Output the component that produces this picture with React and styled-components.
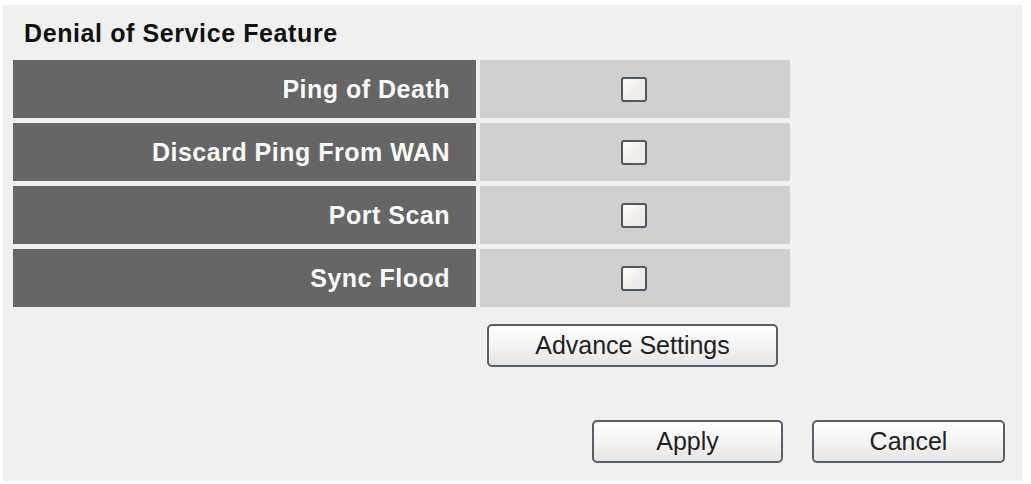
import { Fragment } from 'react'
import styled, { createGlobalStyle } from 'styled-components'

const GlobalStyle = createGlobalStyle`
    html, body {
        margin: 0;
        padding: 0;
        background: #fff;
    }
    body {
        font-family: "Liberation Sans", Arial, sans-serif;
    }
`;

const Panel = styled.section`
    margin: 5px 9px 3px 3px;
    padding: 13px 17px 18px 10px;
    background: #f0f0f0;
    box-sizing: border-box;
    height: 476px;
`;

const Title = styled.h1`
    margin: 0 0 12px 11px;
    font-size: 25px;
    line-height: 30px;
    font-weight: 700;
    letter-spacing: 0.6px;
    color: #111;
`;

const Table = styled.div`
    display: grid;
    grid-template-columns: 463px 310px;
    column-gap: 4px;
    row-gap: 5px;
    width: 777px;
`;

const Label = styled.div`
    height: 58px;
    background: #666;
    color: #fafafa;
    font-size: 25px;
    font-weight: 700;
    letter-spacing: 0.5px;
    display: flex;
    align-items: center;
    justify-content: flex-end;
    padding-right: 26px;
    box-sizing: border-box;
`;

const Value = styled.div`
    height: 58px;
    background: #d0d0d0;
    display: flex;
    align-items: center;
    justify-content: center;
`;

const Check = styled.input.attrs({ type: 'checkbox' })`
    appearance: none;
    margin: 0 0 0 -2px;
    width: 26px;
    height: 25px;
    border: 2px solid #4d5864;
    border-radius: 3px;
    box-sizing: border-box;
    background: linear-gradient(135deg, #ffffff 0%, #f3ece8 55%, #e4ecf6 100%);
`;

const AdvanceRow = styled.div`
    display: grid;
    grid-template-columns: 463px 310px;
    column-gap: 4px;
    width: 777px;
    margin-top: 17px;
`;

const AdvanceCell = styled.div`
    grid-column: 2;
    padding-left: 7px;
`;

const Button = styled.button`
    width: ${p => p.$w}px;
    height: 43px;
    padding: 0;
    font-family: "Liberation Sans", Arial, sans-serif;
    font-size: 25px;
    color: #222;
    background: linear-gradient(#ffffff, #f4f4f4 50%, #e6e6e6);
    border: 2px solid #55606c;
    border-radius: 5px;
    cursor: pointer;
`;

const Actions = styled.div`
    display: flex;
    justify-content: flex-end;
    gap: 29px;
    margin-top: 53px;
`;

const features = ['Ping of Death', 'Discard Ping From WAN', 'Port Scan', 'Sync Flood'];

const App = () => {
    return (
        <>
            <GlobalStyle />
            <Panel>
                <Title>Denial of Service Feature</Title>
                <Table>
                    {features.map((f) => (
                        <Fragment key={f}>
                            <Label>{f}</Label>
                            <Value>
                                <Check />
                            </Value>
                        </Fragment>
                    ))}
                </Table>
                <AdvanceRow>
                    <AdvanceCell>
                        <Button $w={291}>Advance Settings</Button>
                    </AdvanceCell>
                </AdvanceRow>
                <Actions>
                    <Button $w={191}>Apply</Button>
                    <Button $w={193}>Cancel</Button>
                </Actions>
            </Panel>
        </>
    )
}

export default App
